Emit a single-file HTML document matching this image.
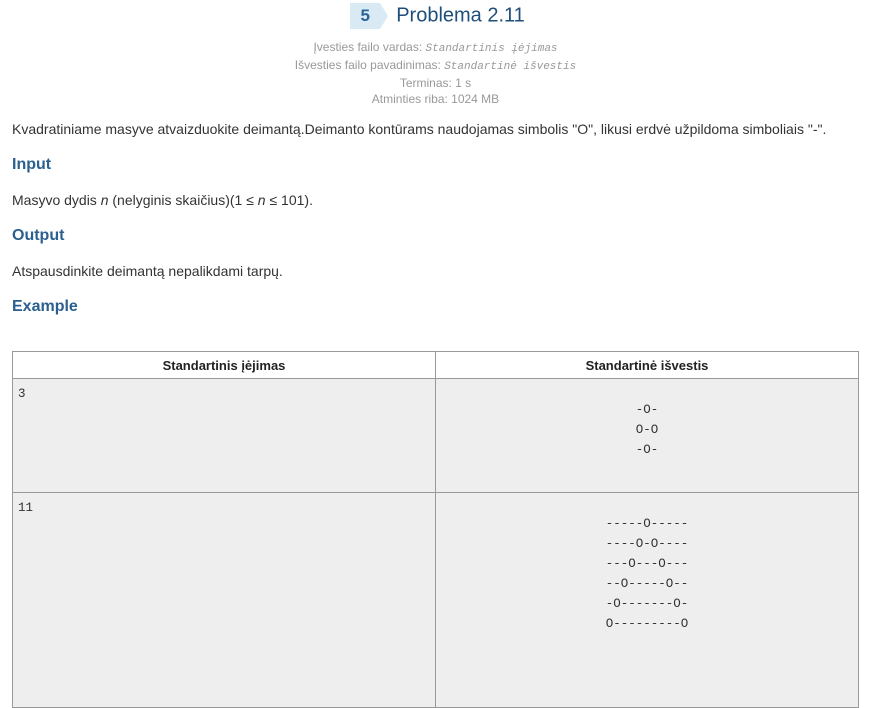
<!DOCTYPE html>
<html><head><meta charset="utf-8"><style>
body{margin:0;background:#fff;font-family:"Liberation Sans",sans-serif;color:#333;font-size:14px;width:871px;height:633px;overflow:hidden;position:relative}
.a{position:absolute}
.title{left:2px;width:871px;top:3px;text-align:center;font-size:20px;color:#1e4f7a}
.badge{display:inline-block;background:#d9eaf5;color:#2a6496;font-weight:bold;font-size:17px;width:30px;height:26px;line-height:26px;text-align:center;position:relative;margin-right:16px;vertical-align:middle}
.badge:after{content:"";position:absolute;right:-8px;top:0;border-left:8px solid #d9eaf5;border-top:13px solid transparent;border-bottom:13px solid transparent}
.meta{left:0;width:871px;top:39px;text-align:center;font-size:12px;color:#999;line-height:16px}
.meta i{font-family:"Liberation Mono",monospace;font-size:11px}
h3{margin:0;font-size:16px;color:#2a5f8f;font-weight:bold}
table{position:absolute;left:12px;top:351px;width:847px;border-collapse:collapse;background:#eee}
th{background:#fff;font-size:13px;height:26px;padding:0;border:1px solid #999;color:#222}
td{border:1px solid #999;vertical-align:top;font-family:"Liberation Mono",monospace;font-size:12.5px;color:#333}
td.l{padding:8px 5px 6px;width:412px}
td.r{text-align:center;padding-top:21px;line-height:20px;white-space:pre}
</style></head><body>
<div class="a title"><span class="badge">5</span>Problema 2.11</div>
<div class="a meta">Įvesties failo vardas: <i>Standartinis įėjimas</i><br>Išvesties failo pavadinimas: <i>Standartinė išvestis</i><br>Terminas: 1 s<br>Atminties riba: 1024 MB</div>
<div class="a" style="left:12px;top:121px">Kvadratiniame masyve atvaizduokite deimantą.Deimanto kontūrams naudojamas simbolis "O", likusi erdvė užpildoma simboliais "-".</div>
<h3 class="a" style="left:12px;top:156px">Input</h3>
<div class="a" style="left:12px;top:192px">Masyvo dydis <i>n</i> (nelyginis skaičius)(1 ≤ <i>n</i> ≤ 101).</div>
<h3 class="a" style="left:12px;top:227px">Output</h3>
<div class="a" style="left:12px;top:263px">Atspausdinkite deimantą nepalikdami tarpų.</div>
<h3 class="a" style="left:12px;top:298px">Example</h3>
<table>
<tr><th>Standartinis įėjimas</th><th>Standartinė išvestis</th></tr>
<tr><td class="l" style="height:99px">3</td><td class="r">-O-
O-O
-O-</td></tr>
<tr><td class="l" style="height:200px">11</td><td class="r">-----O-----
----O-O----
---O---O---
--O-----O--
-O-------O-
O---------O</td></tr>
</table>
</body></html>
